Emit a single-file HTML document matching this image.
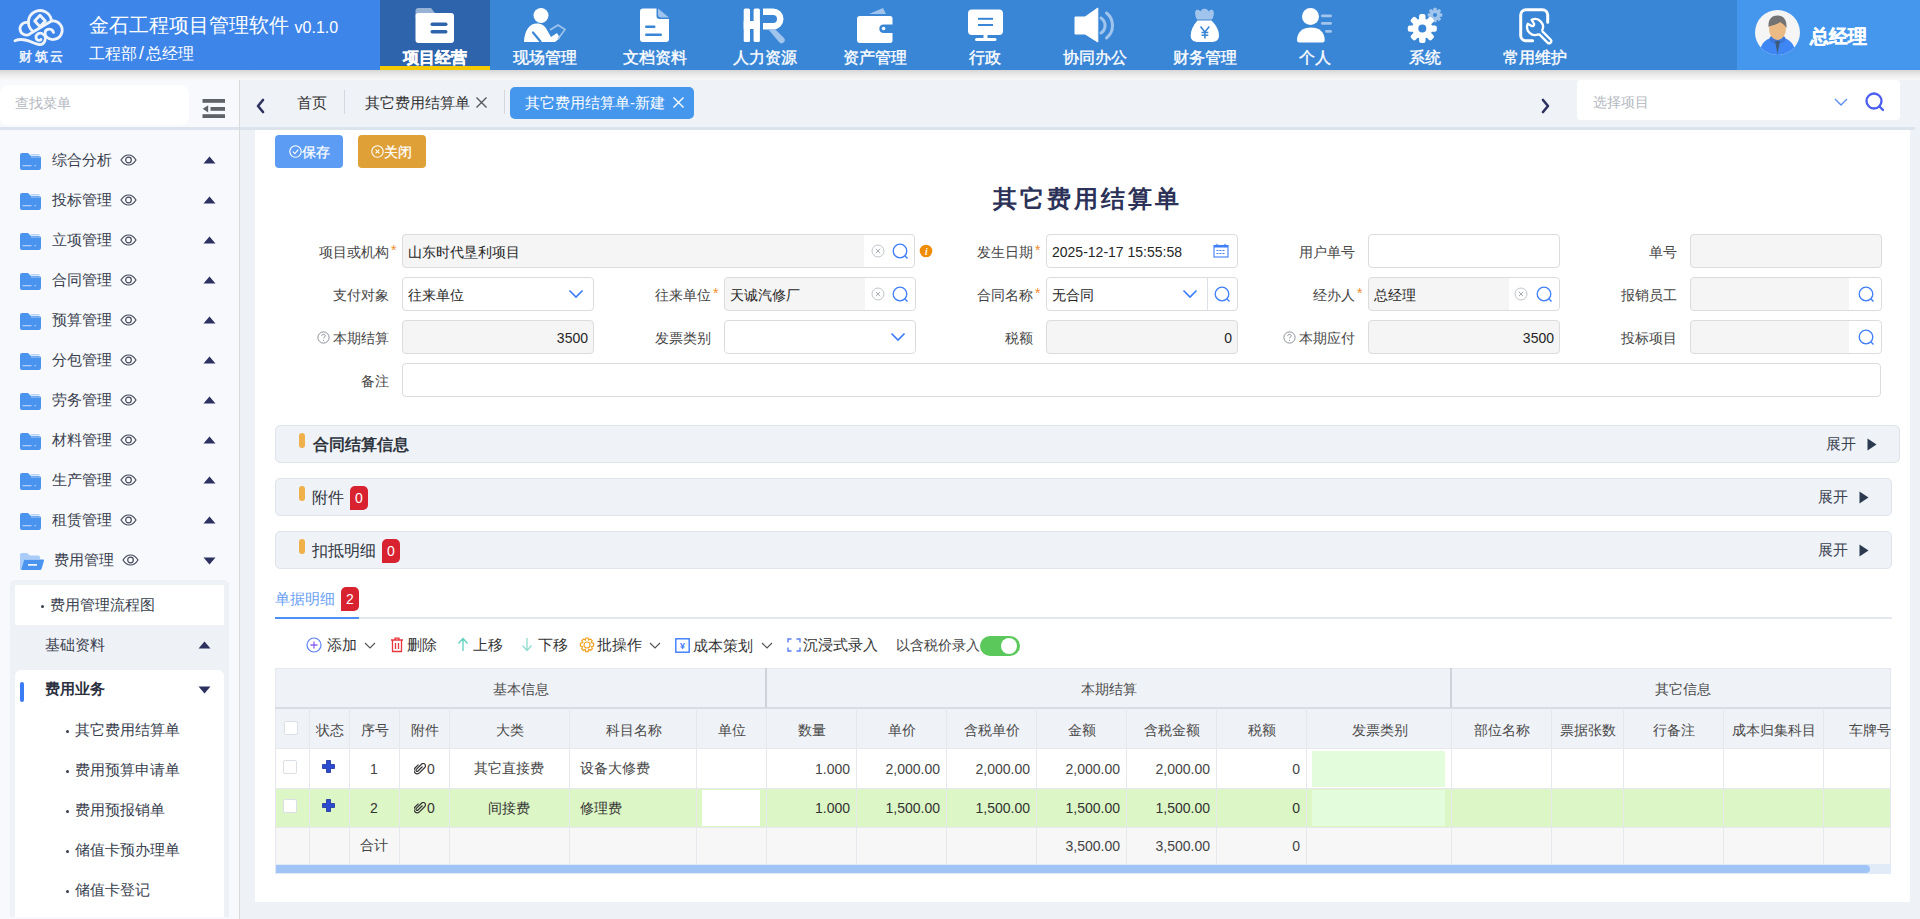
<!DOCTYPE html>
<html><head><meta charset="utf-8">
<style>
*{box-sizing:border-box;margin:0;padding:0}
html,body{width:1920px;height:919px;overflow:hidden;background:#eef1f6;font-family:"Liberation Sans",sans-serif;color:#333;font-size:14px}
.a{position:absolute}
#hdr{left:0;top:0;width:1920px;height:70px;background:#3a86d6}
#logo{left:0;top:0;width:380px;height:70px;background:#3d85e8}
#user{left:1737px;top:0;width:183px;height:70px;background:#4597ee}
.nav{top:0;width:110px;height:70px;color:#fff;text-align:center}
.nav .lb{position:absolute;left:0;top:47.5px;-webkit-text-stroke:.35px #fff;width:110px;font-size:16px;line-height:20px;white-space:nowrap}
.nav svg{position:absolute;left:35px;top:7px}
.nav.on{background:#2e64ab}
.nav.on .lb{font-weight:bold}
.nav.on:after{content:"";position:absolute;left:0;top:66px;width:110px;height:4px;background:#f5c900}
#shadow{left:0;top:70px;width:1920px;height:10px;background:linear-gradient(#d6d6d6,#ececec 50%,#f8f8f8)}
#tabbar{left:240px;top:80px;width:1680px;height:47px;background:#eff2f7}
#sbtop{left:0;top:80px;width:240px;height:47px;background:#f7f9fc}
#tbline{left:0;top:127px;width:1915px;height:3px;background:#dde3ec}
#side{left:0;top:130px;width:239px;height:789px;background:#f7f9fc}
#sideb{left:239px;top:80px;width:1px;height:839px;background:#dadada}
.mi{left:0;width:239px;height:40px}
.mi .t{position:absolute;left:52px;top:10px;font-size:15px;line-height:20px;color:#3a3f4f}
.st{left:52px;font-size:15px;line-height:20px;color:#3a3f4f;white-space:nowrap}
.st2{font-size:15px;line-height:20px;color:#3a3f4f;white-space:nowrap}
.sd{font-size:15px;line-height:20px;color:#3a3f4f}
.btn{width:68px;height:33px;border-radius:4px;color:#fff;font-size:14px;line-height:20px;-webkit-text-stroke:.25px #fff}
.inp{height:34px;border:1px solid #dcdcdc;border-radius:4px}
.it{font-size:14px;line-height:20px;color:#262626;white-space:nowrap}
.lbl{width:200px;text-align:right;font-size:14px;line-height:20px;color:#444;white-space:nowrap}
.star{font-size:14px;line-height:20px;color:#f08c2a}
.sec{background:#eff3f8;border:1px solid #dfe3ea;border-radius:5px}
.pill{width:6px;height:15px;border-radius:3px;background:#f0b14a}
.zk{font-size:15px;line-height:20px;color:#3a4150;white-space:nowrap}
.badge{width:18px;height:24px;border-radius:5px 5px 5px 0;background:#d9222f;color:#fff;font-size:14px;line-height:24px;text-align:center}
.tb{font-size:15px;line-height:20px;color:#333;white-space:nowrap}
.th{font-size:14px;line-height:20px;color:#4a4a4a;text-align:center;white-space:nowrap}
.td{font-size:14px;line-height:20px;white-space:nowrap;color:#444}
.cb{width:14px;height:14px;border:1px solid #dcdfe6;border-radius:2px;background:#fff}
#panel{left:255px;top:130px;width:1655px;height:772px;background:#fff}
</style></head><body>
<div id="hdr" class="a"></div>
<div id="logo" class="a"></div>
<div id="user" class="a"></div>
<svg class="a" style="left:0px;top:0px" width="80" height="50" viewBox="0 0 80 50"><g fill="none" stroke="#eef3fc" stroke-width="2.8" stroke-linecap="round" stroke-linejoin="round">
<path d="M28.5,22.8 A6.3,6.3 0 1 0 30,33.8 L51.5,21 A9.3,9.3 0 1 1 46.5,37"/>
<path d="M32.5,31 A11.6,11.6 0 1 1 51.5,20.5"/>
<path d="M40,15.2 L45.3,21 L40,26.8 L34.7,21Z"/>
<path d="M53.5,32.5 A4.5,4.5 0 0 0 45.2,31.5 C44.7,33.5 45.3,35.5 46.5,37"/>
<path d="M41,39.5 C40,41 36,40.5 36,37.5 C36,34 39.5,32.5 42,33.5 C45,35 46,38 45,40.5 C44,43.5 41.5,44.8 39,44.5 C34,44 29,39.5 21,39.5 C18,39.5 16,40.3 15,40.8"/>
</g></svg>
<div class="a" style="left:19px;top:48px;width:50px;font-size:13px;line-height:17px;font-weight:bold;color:#eef3fc;letter-spacing:2.5px;white-space:nowrap">财筑云</div>
<div class="a" style="left:89px;top:12px;font-size:20px;line-height:26px;color:#fff;white-space:nowrap">金石工程项目管理软件 <span style="font-size:16px;position:relative;top:1px">v0.1.0</span></div>
<div class="a" style="left:89px;top:42px;font-size:16px;line-height:22px;color:#fff;white-space:nowrap">工程部<span style="margin:0 2px;font-size:18px">/</span>总经理</div>
<div class="a nav on" style="left:380px"><svg width="50" height="40" viewBox="0 0 50 40" style="left:30px;top:5px"><path d="M5.5,6 a3,3 0 0 1 3,-3 H21 l4,5 V12 H5.5Z" fill="#97b2d5"/><rect x="5.5" y="8" width="38.5" height="30" rx="3" fill="#fff"/><rect x="20.5" y="17.5" width="17" height="3.5" rx="1.7" fill="#2e64ab"/><rect x="20.5" y="25" width="17" height="3.5" rx="1.7" fill="#2e64ab"/></svg><div class="lb">项目经营</div></div>
<div class="a nav" style="left:490px"><svg width="50" height="40" viewBox="0 0 50 40" style="left:30px;top:5px"><circle cx="21" cy="10.5" r="7.5" fill="#fff"/><path d="M4,37 C4.5,26 9,18.5 17,18.5 C22,18.5 25,21 27,25 L31,32 L37,28 L40,33 L35,37 Z" fill="#fff"/><path d="M30,25 L38,20 L45,24.5 L38,34" fill="none" stroke="#a0c4ec" stroke-width="1.6"/><path d="M13,27.5 L20.5,36.5" stroke="#3a86d6" stroke-width="2.2" stroke-linecap="round"/></svg><div class="lb">现场管理</div></div>
<div class="a nav" style="left:600px"><svg width="50" height="40" viewBox="0 0 50 40" style="left:30px;top:5px"><path d="M13,3.5 H26.5 V11 a3,3 0 0 0 3,3 H39 V34 a3,3 0 0 1 -3,3 H13 a3,3 0 0 1 -3,-3 V6.5 a3,3 0 0 1 3,-3 Z" fill="#fff"/><path d="M28,3.5 L39,12.5 H31 a3,3 0 0 1 -3,-3 Z" fill="#a0c4ec"/><rect x="15" y="20.5" width="10.5" height="2.5" rx="1.2" fill="#3a86d6"/><rect x="15" y="28.5" width="17" height="2.5" rx="1.2" fill="#3a86d6"/></svg><div class="lb">文档资料</div></div>
<div class="a nav" style="left:710px"><svg width="50" height="40" viewBox="0 0 50 40" style="left:30px;top:5px"><rect x="3.7" y="3.5" width="6.3" height="33.5" rx="1.5" fill="#fff"/><rect x="13.6" y="3.5" width="6.3" height="33.5" rx="1.5" fill="#fff"/><rect x="3.7" y="16" width="16" height="8" fill="#fff"/><path d="M23,3.5 H33 a10.5,10.5 0 0 1 0,21 H23 V18 H33 a4,4 0 0 0 0,-8 H23 Z" fill="#fff"/><path d="M28,24 L35,24 L44,33 a3,3 0 0 1 -5,4 Z" fill="#a0c4ec"/></svg><div class="lb">人力资源</div></div>
<div class="a nav" style="left:820px"><svg width="50" height="40" viewBox="0 0 50 40" style="left:30px;top:5px"><path d="M19,9 L33,3 L36,9 Z" fill="#a0c4ec"/><path d="M10,11 H40 a2.5,2.5 0 0 1 2.5,2.5 V19.5 H33 a4.3,4.3 0 0 0 0,8.5 H42.5 V35.5 a2.5,2.5 0 0 1 -2.5,2.5 H10 a3,3 0 0 1 -3,-3 V14 a3,3 0 0 1 3,-3Z" fill="#fff"/><circle cx="33.6" cy="23.5" r="1.8" fill="#fff"/></svg><div class="lb">资产管理</div></div>
<div class="a nav" style="left:930px"><svg width="50" height="40" viewBox="0 0 50 40" style="left:30px;top:5px"><rect x="8" y="4.5" width="35" height="25.5" rx="4" fill="#fff"/><rect x="18" y="12.8" width="15" height="2" fill="#3a86d6"/><rect x="18" y="19" width="15" height="2" fill="#3a86d6"/><rect x="23.5" y="30" width="4" height="4" fill="#fff"/><rect x="15" y="33" width="21.5" height="3" rx="1.5" fill="#fff"/></svg><div class="lb">行政</div></div>
<div class="a nav" style="left:1040px"><svg width="50" height="40" viewBox="0 0 50 40" style="left:30px;top:5px"><path d="M5,12 H15 L27.8,3 V37 L15,29 H5 Z" fill="#fff" stroke="#fff" stroke-width="1" stroke-linejoin="round"/><path d="M31,13 A9,9 0 0 1 31,28" fill="none" stroke="#a0c4ec" stroke-width="3" stroke-linecap="round"/><path d="M36.5,8 A16,16 0 0 1 36.5,33" fill="none" stroke="#a0c4ec" stroke-width="3" stroke-linecap="round"/></svg><div class="lb">协同办公</div></div>
<div class="a nav" style="left:1150px"><svg width="50" height="40" viewBox="0 0 50 40" style="left:30px;top:5px"><path d="M17,14.5 C15.5,12 14.5,8.5 15.5,6 C16.5,4 19,4.5 20.5,6.5 C21.5,4.5 23,3.5 24.5,4 C26,3.5 27.5,4.5 28.5,6.5 C30,4.5 32.5,4 33.5,6 C34.5,8.5 33.5,12 32,14.5 Z" fill="#a0c4ec"/><path d="M17.5,15.5 H31.5 C36.5,20.5 39,25.5 39,30.5 C39,35 36,37 31,37 H18.5 C13.5,37 10.7,35 10.7,30.5 C10.7,25.5 13,20.5 17.5,15.5Z" fill="#fff"/><path d="M20.5,21.5 L24.9,27 L29.3,21.5 M24.9,27 V33.5 M21.5,27.5 H28.3 M21.5,30.3 H28.3" fill="none" stroke="#3a86d6" stroke-width="1.6"/></svg><div class="lb">财务管理</div></div>
<div class="a nav" style="left:1260px"><svg width="50" height="40" viewBox="0 0 50 40" style="left:30px;top:5px"><circle cx="20.5" cy="11.5" r="8.5" fill="#fff"/><path d="M7,35 C7,27 13,22.5 21,22.5 C29,22.5 34.7,27 34.7,35 a2.5,2.5 0 0 1 -2.5,2.5 H9.5 a2.5,2.5 0 0 1 -2.5,-2.5Z" fill="#fff"/><rect x="31" y="9.5" width="11" height="2.8" rx="1.4" fill="#a0c4ec"/><rect x="31" y="17" width="11" height="2.8" rx="1.4" fill="#a0c4ec"/><rect x="35" y="25" width="7" height="2.8" rx="1.4" fill="#a0c4ec"/></svg><div class="lb">个人</div></div>
<div class="a nav" style="left:1370px"><svg width="50" height="40" viewBox="0 0 50 40" style="left:30px;top:5px"><g transform="translate(35,10)"><circle r="5.3" fill="#a0c4ec"/><g fill="#a0c4ec"><rect x="-1.7" y="-7.3" width="3.4" height="14.6" rx=".8"/><rect x="-1.7" y="-7.3" width="3.4" height="14.6" rx=".8" transform="rotate(45)"/><rect x="-1.7" y="-7.3" width="3.4" height="14.6" rx=".8" transform="rotate(90)"/><rect x="-1.7" y="-7.3" width="3.4" height="14.6" rx=".8" transform="rotate(135)"/></g><circle r="2" fill="#3a86d6"/></g><g transform="translate(22.3,23.6)"><circle r="10" fill="#fff"/><g fill="#fff"><rect x="-3.2" y="-14.5" width="6.4" height="29" rx="2"/><rect x="-3.2" y="-14.5" width="6.4" height="29" rx="2" transform="rotate(45)"/><rect x="-3.2" y="-14.5" width="6.4" height="29" rx="2" transform="rotate(90)"/><rect x="-3.2" y="-14.5" width="6.4" height="29" rx="2" transform="rotate(135)"/></g><circle r="4" fill="#3a86d6"/></g></svg><div class="lb">系统</div></div>
<div class="a nav" style="left:1480px"><svg width="50" height="40" viewBox="0 0 50 40" style="left:30px;top:5px"><path d="M37.7,17.3 V10 a5.3,5.3 0 0 0 -5.3,-5.3 H16 a5.3,5.3 0 0 0 -5.3,5.3 V30.5 a5.3,5.3 0 0 0 5.3,5.3 H22.6" fill="none" stroke="#fff" stroke-width="3" stroke-linecap="round"/><path transform="translate(2.5,2.2) scale(0.9)" d="M32.7,26.27 A8.8,8.8 0 0 0 21.28,14.02 L23.89,18.37 A2,2 0 0 1 21.37,20.89 L17.02,18.28 A8.8,8.8 0 0 0 29.27,29.7 M32.7,26.27 L42.3,35.9 A2.4,2.4 0 0 1 38.9,39.3 L29.27,29.7" fill="none" stroke="#fff" stroke-width="2.6" stroke-linejoin="round"/></svg><div class="lb">常用维护</div></div>
<svg class="a" style="left:1755px;top:10px" width="46" height="46" viewBox="0 0 46 46"><defs><clipPath id="avc"><circle cx="22.5" cy="22.5" r="22.5"/></clipPath></defs><circle cx="22.5" cy="22.5" r="22.5" fill="#f5f5f5"/><g clip-path="url(#avc)"><path d="M4.5,45 C4.5,33 12,27 22.5,27 C33,27 40.5,33 40.5,45Z" fill="#3f86f5"/><ellipse cx="22.5" cy="29" rx="8" ry="5" fill="#3a77d8"/><path d="M20,31 L22.5,44 L25,31Z" fill="#3d5a7a"/><ellipse cx="22.5" cy="19" rx="8.5" ry="11" fill="#ecbb85"/><path d="M13.5,17 C13,9 17,5.5 22.5,5.5 C28,5.5 32,9 31.5,18 C29,14 26,13 25,12 C22,15 17,15 13.5,17Z" fill="#737373"/></g></svg>
<div class="a" style="left:1810px;top:25px;font-size:18.5px;line-height:24px;font-weight:bold;color:#fff;-webkit-text-stroke:.4px #fff;white-space:nowrap">总经理</div>
<div id="shadow" class="a"></div>
<div id="sbtop" class="a"></div>
<div id="tabbar" class="a"></div>
<div id="tbline" class="a"></div>
<div class="a" style="left:0;top:85px;width:189px;height:40px;background:#fff;border-radius:8px"></div>
<div class="a" style="left:15px;top:93px;font-size:14px;line-height:20px;color:#b4b8bf">查找菜单</div>
<svg class="a" style="left:202px;top:99px" width="24" height="21" viewBox="0 0 24 21"><g fill="#5f6368"><rect x="0.5" y="0" width="22.5" height="3.8"/><rect x="8.5" y="8" width="14.5" height="3.8"/><rect x="0.5" y="15.2" width="22.5" height="3.8"/><path d="M0.8,9.8 L6.2,6.2 V13.4Z"/></g></svg>
<svg class="a" style="left:255px;top:98px" width="12" height="16" viewBox="0 0 12 16"><path d="M8,2 L3,8 L8,14" fill="none" stroke="#2d3160" stroke-width="2.6" stroke-linecap="round" stroke-linejoin="round"/></svg>
<div class="a" style="left:297px;top:93px;font-size:15px;line-height:20px;color:#333">首页</div>
<div class="a" style="left:344px;top:90px;width:1px;height:24px;background:#d4d8de"></div>
<div class="a" style="left:365px;top:93px;font-size:15px;line-height:20px;color:#333;white-space:nowrap">其它费用结算单</div>
<svg class="a" style="left:475px;top:96px" width="13" height="13" viewBox="0 0 13 13"><path d="M1.5,1.5 L11.5,11.5 M11.5,1.5 L1.5,11.5" stroke="#555" stroke-width="1.3"/></svg>
<div class="a" style="left:504px;top:90px;width:1px;height:24px;background:#d4d8de"></div>
<div class="a" style="left:510px;top:87px;width:184px;height:32px;background:#4597ee;border-radius:5px"></div>
<div class="a" style="left:525px;top:93px;font-size:15px;line-height:20px;color:#fff;white-space:nowrap">其它费用结算单-新建</div>
<svg class="a" style="left:672px;top:96px" width="13" height="13" viewBox="0 0 13 13"><path d="M1.5,1.5 L11.5,11.5 M11.5,1.5 L1.5,11.5" stroke="#fff" stroke-width="1.4"/></svg>
<svg class="a" style="left:1539px;top:98px" width="12" height="16" viewBox="0 0 12 16"><path d="M4,2 L9,8 L4,14" fill="none" stroke="#2d3160" stroke-width="2.6" stroke-linecap="round" stroke-linejoin="round"/></svg>
<div class="a" style="left:1577px;top:80px;width:323px;height:40px;background:#fff;border-radius:4px"></div>
<div class="a" style="left:1593px;top:92px;font-size:14px;line-height:20px;color:#b4b8bf">选择项目</div>
<svg class="a" style="left:1833px;top:97px" width="16" height="10" viewBox="0 0 16 10"><path d="M2,2 L8,8 L14,2" fill="none" stroke="#5a8df0" stroke-width="1.4"/></svg>
<svg class="a" style="left:1864px;top:91px" width="22" height="22" viewBox="0 0 22 22"><circle cx="10" cy="10" r="7.5" fill="none" stroke="#4b5ef0" stroke-width="2.3"/><path d="M15.5,15.5 L19,19" stroke="#4b5ef0" stroke-width="2.4" stroke-linecap="round"/></svg>
<div id="side" class="a"></div>
<div id="sideb" class="a"></div>
<svg class="a" style="left:20px;top:153px" width="22" height="18" viewBox="0 0 22 18"><path d="M0,2 a2,2 0 0 1 2,-2 H8 L11,3 H19 a2,2 0 0 1 2,2 V15 a2,2 0 0 1 -2,2 H2 a2,2 0 0 1 -2,-2Z" fill="#4a94f0"/><rect x="11" y="1.2" width="8.5" height="1.2" fill="#a9cdf8"/><rect x="11" y="3.6" width="9" height="0.9" fill="#a9cdf8"/><rect x="2.5" y="12" width="9" height="1.3" fill="#a9cdf8"/><rect x="14.5" y="12" width="1.5" height="1.3" fill="#a9cdf8"/></svg><div class="a st" style="top:150px">综合分析</div><svg class="a" style="left:120px;top:154px" width="17" height="12" viewBox="0 0 17 12"><path d="M1,6 C3.5,2 6,1 8.5,1 C11,1 13.5,2 16,6 C13.5,10 11,11 8.5,11 C6,11 3.5,10 1,6Z" fill="none" stroke="#454a5a" stroke-width="1.2"/><circle cx="8.5" cy="6" r="2.8" fill="none" stroke="#454a5a" stroke-width="1.2"/></svg><svg class="a" style="left:203px;top:156px" width="13" height="8" viewBox="0 0 13 8"><path d="M0.5,7.5 L6.5,0.5 L12.5,7.5Z" fill="#2d3160"/></svg>
<svg class="a" style="left:20px;top:193px" width="22" height="18" viewBox="0 0 22 18"><path d="M0,2 a2,2 0 0 1 2,-2 H8 L11,3 H19 a2,2 0 0 1 2,2 V15 a2,2 0 0 1 -2,2 H2 a2,2 0 0 1 -2,-2Z" fill="#4a94f0"/><rect x="11" y="1.2" width="8.5" height="1.2" fill="#a9cdf8"/><rect x="11" y="3.6" width="9" height="0.9" fill="#a9cdf8"/><rect x="2.5" y="12" width="9" height="1.3" fill="#a9cdf8"/><rect x="14.5" y="12" width="1.5" height="1.3" fill="#a9cdf8"/></svg><div class="a st" style="top:190px">投标管理</div><svg class="a" style="left:120px;top:194px" width="17" height="12" viewBox="0 0 17 12"><path d="M1,6 C3.5,2 6,1 8.5,1 C11,1 13.5,2 16,6 C13.5,10 11,11 8.5,11 C6,11 3.5,10 1,6Z" fill="none" stroke="#454a5a" stroke-width="1.2"/><circle cx="8.5" cy="6" r="2.8" fill="none" stroke="#454a5a" stroke-width="1.2"/></svg><svg class="a" style="left:203px;top:196px" width="13" height="8" viewBox="0 0 13 8"><path d="M0.5,7.5 L6.5,0.5 L12.5,7.5Z" fill="#2d3160"/></svg>
<svg class="a" style="left:20px;top:233px" width="22" height="18" viewBox="0 0 22 18"><path d="M0,2 a2,2 0 0 1 2,-2 H8 L11,3 H19 a2,2 0 0 1 2,2 V15 a2,2 0 0 1 -2,2 H2 a2,2 0 0 1 -2,-2Z" fill="#4a94f0"/><rect x="11" y="1.2" width="8.5" height="1.2" fill="#a9cdf8"/><rect x="11" y="3.6" width="9" height="0.9" fill="#a9cdf8"/><rect x="2.5" y="12" width="9" height="1.3" fill="#a9cdf8"/><rect x="14.5" y="12" width="1.5" height="1.3" fill="#a9cdf8"/></svg><div class="a st" style="top:230px">立项管理</div><svg class="a" style="left:120px;top:234px" width="17" height="12" viewBox="0 0 17 12"><path d="M1,6 C3.5,2 6,1 8.5,1 C11,1 13.5,2 16,6 C13.5,10 11,11 8.5,11 C6,11 3.5,10 1,6Z" fill="none" stroke="#454a5a" stroke-width="1.2"/><circle cx="8.5" cy="6" r="2.8" fill="none" stroke="#454a5a" stroke-width="1.2"/></svg><svg class="a" style="left:203px;top:236px" width="13" height="8" viewBox="0 0 13 8"><path d="M0.5,7.5 L6.5,0.5 L12.5,7.5Z" fill="#2d3160"/></svg>
<svg class="a" style="left:20px;top:273px" width="22" height="18" viewBox="0 0 22 18"><path d="M0,2 a2,2 0 0 1 2,-2 H8 L11,3 H19 a2,2 0 0 1 2,2 V15 a2,2 0 0 1 -2,2 H2 a2,2 0 0 1 -2,-2Z" fill="#4a94f0"/><rect x="11" y="1.2" width="8.5" height="1.2" fill="#a9cdf8"/><rect x="11" y="3.6" width="9" height="0.9" fill="#a9cdf8"/><rect x="2.5" y="12" width="9" height="1.3" fill="#a9cdf8"/><rect x="14.5" y="12" width="1.5" height="1.3" fill="#a9cdf8"/></svg><div class="a st" style="top:270px">合同管理</div><svg class="a" style="left:120px;top:274px" width="17" height="12" viewBox="0 0 17 12"><path d="M1,6 C3.5,2 6,1 8.5,1 C11,1 13.5,2 16,6 C13.5,10 11,11 8.5,11 C6,11 3.5,10 1,6Z" fill="none" stroke="#454a5a" stroke-width="1.2"/><circle cx="8.5" cy="6" r="2.8" fill="none" stroke="#454a5a" stroke-width="1.2"/></svg><svg class="a" style="left:203px;top:276px" width="13" height="8" viewBox="0 0 13 8"><path d="M0.5,7.5 L6.5,0.5 L12.5,7.5Z" fill="#2d3160"/></svg>
<svg class="a" style="left:20px;top:313px" width="22" height="18" viewBox="0 0 22 18"><path d="M0,2 a2,2 0 0 1 2,-2 H8 L11,3 H19 a2,2 0 0 1 2,2 V15 a2,2 0 0 1 -2,2 H2 a2,2 0 0 1 -2,-2Z" fill="#4a94f0"/><rect x="11" y="1.2" width="8.5" height="1.2" fill="#a9cdf8"/><rect x="11" y="3.6" width="9" height="0.9" fill="#a9cdf8"/><rect x="2.5" y="12" width="9" height="1.3" fill="#a9cdf8"/><rect x="14.5" y="12" width="1.5" height="1.3" fill="#a9cdf8"/></svg><div class="a st" style="top:310px">预算管理</div><svg class="a" style="left:120px;top:314px" width="17" height="12" viewBox="0 0 17 12"><path d="M1,6 C3.5,2 6,1 8.5,1 C11,1 13.5,2 16,6 C13.5,10 11,11 8.5,11 C6,11 3.5,10 1,6Z" fill="none" stroke="#454a5a" stroke-width="1.2"/><circle cx="8.5" cy="6" r="2.8" fill="none" stroke="#454a5a" stroke-width="1.2"/></svg><svg class="a" style="left:203px;top:316px" width="13" height="8" viewBox="0 0 13 8"><path d="M0.5,7.5 L6.5,0.5 L12.5,7.5Z" fill="#2d3160"/></svg>
<svg class="a" style="left:20px;top:353px" width="22" height="18" viewBox="0 0 22 18"><path d="M0,2 a2,2 0 0 1 2,-2 H8 L11,3 H19 a2,2 0 0 1 2,2 V15 a2,2 0 0 1 -2,2 H2 a2,2 0 0 1 -2,-2Z" fill="#4a94f0"/><rect x="11" y="1.2" width="8.5" height="1.2" fill="#a9cdf8"/><rect x="11" y="3.6" width="9" height="0.9" fill="#a9cdf8"/><rect x="2.5" y="12" width="9" height="1.3" fill="#a9cdf8"/><rect x="14.5" y="12" width="1.5" height="1.3" fill="#a9cdf8"/></svg><div class="a st" style="top:350px">分包管理</div><svg class="a" style="left:120px;top:354px" width="17" height="12" viewBox="0 0 17 12"><path d="M1,6 C3.5,2 6,1 8.5,1 C11,1 13.5,2 16,6 C13.5,10 11,11 8.5,11 C6,11 3.5,10 1,6Z" fill="none" stroke="#454a5a" stroke-width="1.2"/><circle cx="8.5" cy="6" r="2.8" fill="none" stroke="#454a5a" stroke-width="1.2"/></svg><svg class="a" style="left:203px;top:356px" width="13" height="8" viewBox="0 0 13 8"><path d="M0.5,7.5 L6.5,0.5 L12.5,7.5Z" fill="#2d3160"/></svg>
<svg class="a" style="left:20px;top:393px" width="22" height="18" viewBox="0 0 22 18"><path d="M0,2 a2,2 0 0 1 2,-2 H8 L11,3 H19 a2,2 0 0 1 2,2 V15 a2,2 0 0 1 -2,2 H2 a2,2 0 0 1 -2,-2Z" fill="#4a94f0"/><rect x="11" y="1.2" width="8.5" height="1.2" fill="#a9cdf8"/><rect x="11" y="3.6" width="9" height="0.9" fill="#a9cdf8"/><rect x="2.5" y="12" width="9" height="1.3" fill="#a9cdf8"/><rect x="14.5" y="12" width="1.5" height="1.3" fill="#a9cdf8"/></svg><div class="a st" style="top:390px">劳务管理</div><svg class="a" style="left:120px;top:394px" width="17" height="12" viewBox="0 0 17 12"><path d="M1,6 C3.5,2 6,1 8.5,1 C11,1 13.5,2 16,6 C13.5,10 11,11 8.5,11 C6,11 3.5,10 1,6Z" fill="none" stroke="#454a5a" stroke-width="1.2"/><circle cx="8.5" cy="6" r="2.8" fill="none" stroke="#454a5a" stroke-width="1.2"/></svg><svg class="a" style="left:203px;top:396px" width="13" height="8" viewBox="0 0 13 8"><path d="M0.5,7.5 L6.5,0.5 L12.5,7.5Z" fill="#2d3160"/></svg>
<svg class="a" style="left:20px;top:433px" width="22" height="18" viewBox="0 0 22 18"><path d="M0,2 a2,2 0 0 1 2,-2 H8 L11,3 H19 a2,2 0 0 1 2,2 V15 a2,2 0 0 1 -2,2 H2 a2,2 0 0 1 -2,-2Z" fill="#4a94f0"/><rect x="11" y="1.2" width="8.5" height="1.2" fill="#a9cdf8"/><rect x="11" y="3.6" width="9" height="0.9" fill="#a9cdf8"/><rect x="2.5" y="12" width="9" height="1.3" fill="#a9cdf8"/><rect x="14.5" y="12" width="1.5" height="1.3" fill="#a9cdf8"/></svg><div class="a st" style="top:430px">材料管理</div><svg class="a" style="left:120px;top:434px" width="17" height="12" viewBox="0 0 17 12"><path d="M1,6 C3.5,2 6,1 8.5,1 C11,1 13.5,2 16,6 C13.5,10 11,11 8.5,11 C6,11 3.5,10 1,6Z" fill="none" stroke="#454a5a" stroke-width="1.2"/><circle cx="8.5" cy="6" r="2.8" fill="none" stroke="#454a5a" stroke-width="1.2"/></svg><svg class="a" style="left:203px;top:436px" width="13" height="8" viewBox="0 0 13 8"><path d="M0.5,7.5 L6.5,0.5 L12.5,7.5Z" fill="#2d3160"/></svg>
<svg class="a" style="left:20px;top:473px" width="22" height="18" viewBox="0 0 22 18"><path d="M0,2 a2,2 0 0 1 2,-2 H8 L11,3 H19 a2,2 0 0 1 2,2 V15 a2,2 0 0 1 -2,2 H2 a2,2 0 0 1 -2,-2Z" fill="#4a94f0"/><rect x="11" y="1.2" width="8.5" height="1.2" fill="#a9cdf8"/><rect x="11" y="3.6" width="9" height="0.9" fill="#a9cdf8"/><rect x="2.5" y="12" width="9" height="1.3" fill="#a9cdf8"/><rect x="14.5" y="12" width="1.5" height="1.3" fill="#a9cdf8"/></svg><div class="a st" style="top:470px">生产管理</div><svg class="a" style="left:120px;top:474px" width="17" height="12" viewBox="0 0 17 12"><path d="M1,6 C3.5,2 6,1 8.5,1 C11,1 13.5,2 16,6 C13.5,10 11,11 8.5,11 C6,11 3.5,10 1,6Z" fill="none" stroke="#454a5a" stroke-width="1.2"/><circle cx="8.5" cy="6" r="2.8" fill="none" stroke="#454a5a" stroke-width="1.2"/></svg><svg class="a" style="left:203px;top:476px" width="13" height="8" viewBox="0 0 13 8"><path d="M0.5,7.5 L6.5,0.5 L12.5,7.5Z" fill="#2d3160"/></svg>
<svg class="a" style="left:20px;top:513px" width="22" height="18" viewBox="0 0 22 18"><path d="M0,2 a2,2 0 0 1 2,-2 H8 L11,3 H19 a2,2 0 0 1 2,2 V15 a2,2 0 0 1 -2,2 H2 a2,2 0 0 1 -2,-2Z" fill="#4a94f0"/><rect x="11" y="1.2" width="8.5" height="1.2" fill="#a9cdf8"/><rect x="11" y="3.6" width="9" height="0.9" fill="#a9cdf8"/><rect x="2.5" y="12" width="9" height="1.3" fill="#a9cdf8"/><rect x="14.5" y="12" width="1.5" height="1.3" fill="#a9cdf8"/></svg><div class="a st" style="top:510px">租赁管理</div><svg class="a" style="left:120px;top:514px" width="17" height="12" viewBox="0 0 17 12"><path d="M1,6 C3.5,2 6,1 8.5,1 C11,1 13.5,2 16,6 C13.5,10 11,11 8.5,11 C6,11 3.5,10 1,6Z" fill="none" stroke="#454a5a" stroke-width="1.2"/><circle cx="8.5" cy="6" r="2.8" fill="none" stroke="#454a5a" stroke-width="1.2"/></svg><svg class="a" style="left:203px;top:516px" width="13" height="8" viewBox="0 0 13 8"><path d="M0.5,7.5 L6.5,0.5 L12.5,7.5Z" fill="#2d3160"/></svg>
<svg class="a" style="left:20px;top:553px" width="24" height="18" viewBox="0 0 24 18"><path d="M0,2 a2,2 0 0 1 2,-2 H7 L10,2.5 H18 a2,2 0 0 1 2,2 V6 H5 L2,17 H1 a1,1 0 0 1 -1,-1Z" fill="#a9cdf8"/><path d="M5,6.5 H23 a1,1 0 0 1 1,1.2 L21.5,16 a1.5,1.5 0 0 1 -1.5,1 H2.5 a1,1 0 0 1 -1,-1.2 L4,7.5 a1.5,1.5 0 0 1 1,-1Z" fill="#4a94f0"/><rect x="8" y="11" width="9" height="1.8" fill="#e8f1fd"/></svg><div class="a st" style="left:54px;top:550px">费用管理</div><svg class="a" style="left:122px;top:554px" width="17" height="12" viewBox="0 0 17 12"><path d="M1,6 C3.5,2 6,1 8.5,1 C11,1 13.5,2 16,6 C13.5,10 11,11 8.5,11 C6,11 3.5,10 1,6Z" fill="none" stroke="#454a5a" stroke-width="1.2"/><circle cx="8.5" cy="6" r="2.8" fill="none" stroke="#454a5a" stroke-width="1.2"/></svg><svg class="a" style="left:203px;top:557px" width="13" height="8" viewBox="0 0 13 8"><path d="M0.5,0.5 L6.5,7.5 L12.5,0.5Z" fill="#2d3160"/></svg>
<div class="a" style="left:10px;top:580px;width:219px;height:337px;background:#eef1f6;border-radius:5px 5px 0 0"></div>
<div class="a" style="left:15px;top:585px;width:209px;height:40px;background:#fff"></div>
<div class="a" style="left:41px;top:605px;width:3px;height:3px;border-radius:2px;background:#3a3f4f"></div><div class="a st2" style="left:50px;top:595px">费用管理流程图</div>
<div class="a st2" style="left:45px;top:635px">基础资料</div><svg class="a" style="left:198px;top:641px" width="13" height="8" viewBox="0 0 13 8"><path d="M0.5,7.5 L6.5,0.5 L12.5,7.5Z" fill="#2d3160"/></svg>
<div class="a" style="left:15px;top:670px;width:209px;height:247px;background:#fff;border-radius:6px 6px 0 0"></div>
<div class="a" style="left:20px;top:682px;width:4px;height:20px;background:#3b7cf5;border-radius:2px"></div>
<div class="a st2" style="left:45px;top:679px;font-weight:bold;color:#2b3040">费用业务</div><svg class="a" style="left:198px;top:686px" width="13" height="8" viewBox="0 0 13 8"><path d="M0.5,0.5 L6.5,7.5 L12.5,0.5Z" fill="#2d3160"/></svg>
<div class="a" style="left:66px;top:730px;width:3px;height:3px;border-radius:2px;background:#3a3f4f"></div><div class="a st2" style="left:75px;top:720px">其它费用结算单</div>
<div class="a" style="left:66px;top:770px;width:3px;height:3px;border-radius:2px;background:#3a3f4f"></div><div class="a st2" style="left:75px;top:760px">费用预算申请单</div>
<div class="a" style="left:66px;top:810px;width:3px;height:3px;border-radius:2px;background:#3a3f4f"></div><div class="a st2" style="left:75px;top:800px">费用预报销单</div>
<div class="a" style="left:66px;top:850px;width:3px;height:3px;border-radius:2px;background:#3a3f4f"></div><div class="a st2" style="left:75px;top:840px">储值卡预办理单</div>
<div class="a" style="left:66px;top:890px;width:3px;height:3px;border-radius:2px;background:#3a3f4f"></div><div class="a st2" style="left:75px;top:880px">储值卡登记</div>
<div id="panel" class="a"></div>
<div class="a btn" style="left:275px;top:135px;background:#5c9cf5"><svg width="13" height="13" viewBox="0 0 13 13" style="position:absolute;left:14px;top:10px"><circle cx="6.5" cy="6.5" r="5.7" fill="none" stroke="#fff" stroke-width="1.1"/><path d="M3.8,6.7 L5.8,8.6 L9.3,4.6" fill="none" stroke="#fff" stroke-width="1.1"/></svg><span style="position:absolute;left:27px;top:7px">保存</span></div>
<div class="a btn" style="left:358px;top:135px;background:#dea037"><svg width="13" height="13" viewBox="0 0 13 13" style="position:absolute;left:13px;top:10px"><circle cx="6.5" cy="6.5" r="5.7" fill="none" stroke="#fff" stroke-width="1.1"/><path d="M4.6,4.6 L8.4,8.4 M8.4,4.6 L4.6,8.4" fill="none" stroke="#fff" stroke-width="1.1"/></svg><span style="position:absolute;left:26px;top:7px">关闭</span></div>
<div class="a" style="left:993px;top:184px;width:220px;font-size:24px;line-height:30px;font-weight:bold;color:#2c3257;letter-spacing:3px;white-space:nowrap">其它费用结算单</div>
<div class="a lbl" style="left:189px;top:242px">项目或机构</div><div class="a star" style="left:391px;top:240px">*</div><div class="a inp" style="left:402px;top:234px;width:513px;background:#f5f5f5"><div style="position:absolute;right:0;top:0;width:50px;height:32px;background:#fff;border-radius:0 4px 4px 0"></div></div><div class="a it" style="left:408px;top:242px">山东时代垦利项目</div><svg class="a" style="left:871px;top:244px" width="14" height="14" viewBox="0 0 14 14"><circle cx="7" cy="7" r="6" fill="none" stroke="#c0c4cc" stroke-width="1"/><path d="M4.8,4.8 L9.2,9.2 M9.2,4.8 L4.8,9.2" stroke="#a8abb2" stroke-width="1"/></svg><svg class="a" style="left:891px;top:242px" width="18" height="18" viewBox="0 0 18 18"><circle cx="9" cy="9" r="6.8" fill="none" stroke="#3f7ef8" stroke-width="1.3"/><path d="M13.8,13.8 L16.5,16.5" stroke="#3f7ef8" stroke-width="1.4"/></svg><svg class="a" style="left:919px;top:244px" width="14" height="14" viewBox="0 0 14 14"><circle cx="7" cy="7" r="6.3" fill="#f08c00"/><text x="7.3" y="11" font-size="9.5" font-weight="bold" font-style="italic" text-anchor="middle" fill="#fff" font-family="Liberation Serif">i</text></svg><div class="a lbl" style="left:833px;top:242px">发生日期</div><div class="a star" style="left:1035px;top:240px">*</div><div class="a inp" style="left:1046px;top:234px;width:192px;background:#fff"></div><div class="a it" style="left:1052px;top:242px">2025-12-17 15:55:58</div><svg class="a" style="left:1213px;top:243px" width="16" height="15" viewBox="0 0 16 15"><rect x="1" y="2.5" width="14" height="11.5" fill="none" stroke="#3f7ef8" stroke-width="1.1"/><rect x="1" y="2.5" width="14" height="2" fill="#3f7ef8"/><path d="M4,0.8 V3 M12,0.8 V3" stroke="#3f7ef8" stroke-width="1.1"/><path d="M3.5,7.5 H12.5 M3.5,10.5 H12.5" stroke="#3f7ef8" stroke-width="1" stroke-dasharray="2,1"/></svg><div class="a lbl" style="left:1155px;top:242px">用户单号</div><div class="a inp" style="left:1368px;top:234px;width:192px;background:#fff"></div><div class="a lbl" style="left:1477px;top:242px">单号</div><div class="a inp" style="left:1690px;top:234px;width:192px;background:#f5f5f5"></div>
<div class="a lbl" style="left:189px;top:285px">支付对象</div><div class="a inp" style="left:402px;top:277px;width:192px;background:#fff"></div><div class="a it" style="left:408px;top:285px">往来单位</div><svg class="a" style="left:568px;top:289px" width="16" height="10" viewBox="0 0 16 10"><path d="M1.5,1.5 L8,8 L14.5,1.5" fill="none" stroke="#3a7afe" stroke-width="1.6"/></svg><div class="a lbl" style="left:511px;top:285px">往来单位</div><div class="a star" style="left:713px;top:283px">*</div><div class="a inp" style="left:724px;top:277px;width:192px;background:#f5f5f5"><div style="position:absolute;right:0;top:0;width:50px;height:32px;background:#fff;border-radius:0 4px 4px 0"></div></div><div class="a it" style="left:730px;top:285px">天诚汽修厂</div><svg class="a" style="left:871px;top:287px" width="14" height="14" viewBox="0 0 14 14"><circle cx="7" cy="7" r="6" fill="none" stroke="#c0c4cc" stroke-width="1"/><path d="M4.8,4.8 L9.2,9.2 M9.2,4.8 L4.8,9.2" stroke="#a8abb2" stroke-width="1"/></svg><svg class="a" style="left:891px;top:285px" width="18" height="18" viewBox="0 0 18 18"><circle cx="9" cy="9" r="6.8" fill="none" stroke="#3f7ef8" stroke-width="1.3"/><path d="M13.8,13.8 L16.5,16.5" stroke="#3f7ef8" stroke-width="1.4"/></svg><div class="a lbl" style="left:833px;top:285px">合同名称</div><div class="a star" style="left:1035px;top:283px">*</div><div class="a inp" style="left:1046px;top:277px;width:192px;background:#fff"><div style="position:absolute;left:160px;top:0;width:1px;height:32px;background:#dcdfe6"></div></div><div class="a it" style="left:1052px;top:285px">无合同</div><svg class="a" style="left:1182px;top:289px" width="16" height="10" viewBox="0 0 16 10"><path d="M1.5,1.5 L8,8 L14.5,1.5" fill="none" stroke="#3a7afe" stroke-width="1.6"/></svg><svg class="a" style="left:1213px;top:285px" width="18" height="18" viewBox="0 0 18 18"><circle cx="9" cy="9" r="6.8" fill="none" stroke="#3f7ef8" stroke-width="1.3"/><path d="M13.8,13.8 L16.5,16.5" stroke="#3f7ef8" stroke-width="1.4"/></svg><div class="a lbl" style="left:1155px;top:285px">经办人</div><div class="a star" style="left:1357px;top:283px">*</div><div class="a inp" style="left:1368px;top:277px;width:192px;background:#f5f5f5"><div style="position:absolute;right:0;top:0;width:50px;height:32px;background:#fff;border-radius:0 4px 4px 0"></div></div><div class="a it" style="left:1374px;top:285px">总经理</div><svg class="a" style="left:1514px;top:287px" width="14" height="14" viewBox="0 0 14 14"><circle cx="7" cy="7" r="6" fill="none" stroke="#c0c4cc" stroke-width="1"/><path d="M4.8,4.8 L9.2,9.2 M9.2,4.8 L4.8,9.2" stroke="#a8abb2" stroke-width="1"/></svg><svg class="a" style="left:1535px;top:285px" width="18" height="18" viewBox="0 0 18 18"><circle cx="9" cy="9" r="6.8" fill="none" stroke="#3f7ef8" stroke-width="1.3"/><path d="M13.8,13.8 L16.5,16.5" stroke="#3f7ef8" stroke-width="1.4"/></svg><div class="a lbl" style="left:1477px;top:285px">报销员工</div><div class="a inp" style="left:1690px;top:277px;width:192px;background:#f5f5f5"><div style="position:absolute;right:0;top:0;width:32px;height:32px;background:#fff;border-radius:0 4px 4px 0"></div></div><svg class="a" style="left:1857px;top:285px" width="18" height="18" viewBox="0 0 18 18"><circle cx="9" cy="9" r="6.8" fill="none" stroke="#3f7ef8" stroke-width="1.3"/><path d="M13.8,13.8 L16.5,16.5" stroke="#3f7ef8" stroke-width="1.4"/></svg>
<div class="a lbl" style="left:189px;top:328px">本期结算</div><svg class="a" style="left:317px;top:331px" width="13" height="13" viewBox="0 0 13 13"><circle cx="6.5" cy="6.5" r="5.6" fill="none" stroke="#8a8f99" stroke-width="1"/><path d="M4.7,5.1 C4.7,3.9 5.5,3.3 6.5,3.3 C7.5,3.3 8.3,4 8.3,4.9 C8.3,6 6.6,6.1 6.6,7.4" fill="none" stroke="#8a8f99" stroke-width="1"/><circle cx="6.6" cy="9.3" r=".6" fill="#8a8f99"/></svg><div class="a inp" style="left:402px;top:320px;width:192px;background:#f5f5f5"></div><div class="a it" style="left:402px;width:186px;text-align:right;top:328px">3500</div><div class="a lbl" style="left:511px;top:328px">发票类别</div><div class="a inp" style="left:724px;top:320px;width:192px;background:#fff"></div><svg class="a" style="left:890px;top:332px" width="16" height="10" viewBox="0 0 16 10"><path d="M1.5,1.5 L8,8 L14.5,1.5" fill="none" stroke="#3a7afe" stroke-width="1.6"/></svg><div class="a lbl" style="left:833px;top:328px">税额</div><div class="a inp" style="left:1046px;top:320px;width:192px;background:#f5f5f5"></div><div class="a it" style="left:1046px;width:186px;text-align:right;top:328px">0</div><div class="a lbl" style="left:1155px;top:328px">本期应付</div><svg class="a" style="left:1283px;top:331px" width="13" height="13" viewBox="0 0 13 13"><circle cx="6.5" cy="6.5" r="5.6" fill="none" stroke="#8a8f99" stroke-width="1"/><path d="M4.7,5.1 C4.7,3.9 5.5,3.3 6.5,3.3 C7.5,3.3 8.3,4 8.3,4.9 C8.3,6 6.6,6.1 6.6,7.4" fill="none" stroke="#8a8f99" stroke-width="1"/><circle cx="6.6" cy="9.3" r=".6" fill="#8a8f99"/></svg><div class="a inp" style="left:1368px;top:320px;width:192px;background:#f5f5f5"></div><div class="a it" style="left:1368px;width:186px;text-align:right;top:328px">3500</div><div class="a lbl" style="left:1477px;top:328px">投标项目</div><div class="a inp" style="left:1690px;top:320px;width:192px;background:#f5f5f5"><div style="position:absolute;right:0;top:0;width:32px;height:32px;background:#fff;border-radius:0 4px 4px 0"></div></div><svg class="a" style="left:1857px;top:328px" width="18" height="18" viewBox="0 0 18 18"><circle cx="9" cy="9" r="6.8" fill="none" stroke="#3f7ef8" stroke-width="1.3"/><path d="M13.8,13.8 L16.5,16.5" stroke="#3f7ef8" stroke-width="1.4"/></svg>
<div class="a lbl" style="left:189px;top:371px">备注</div><div class="a inp" style="left:402px;top:363px;width:1479px;background:#fff"></div>
<div class="a sec" style="left:275px;top:425px;width:1625px;height:38px"></div><div class="a pill" style="left:299px;top:433px"></div><div class="a" style="left:313px;top:434px;font-size:16px;line-height:22px;font-weight:bold;color:#303640;white-space:nowrap">合同结算信息</div><div class="a zk" style="left:1826px;top:434px">展开</div><svg class="a" style="left:1867px;top:438px" width="10" height="13" viewBox="0 0 10 13"><path d="M0.5,0.5 L9.5,6.5 L0.5,12.5Z" fill="#2c3a4f"/></svg>
<div class="a sec" style="left:275px;top:478px;width:1617px;height:38px"></div><div class="a pill" style="left:299px;top:486px"></div><div class="a" style="left:312px;top:487px;font-size:16px;line-height:22px;color:#303640;white-space:nowrap">附件</div><div class="a badge" style="left:350px;top:486px">0</div><div class="a zk" style="left:1818px;top:487px">展开</div><svg class="a" style="left:1859px;top:491px" width="10" height="13" viewBox="0 0 10 13"><path d="M0.5,0.5 L9.5,6.5 L0.5,12.5Z" fill="#2c3a4f"/></svg>
<div class="a sec" style="left:275px;top:531px;width:1617px;height:38px"></div><div class="a pill" style="left:299px;top:539px"></div><div class="a" style="left:312px;top:540px;font-size:16px;line-height:22px;color:#303640;white-space:nowrap">扣抵明细</div><div class="a badge" style="left:382px;top:539px">0</div><div class="a zk" style="left:1818px;top:540px">展开</div><svg class="a" style="left:1859px;top:544px" width="10" height="13" viewBox="0 0 10 13"><path d="M0.5,0.5 L9.5,6.5 L0.5,12.5Z" fill="#2c3a4f"/></svg>
<div class="a" style="left:275px;top:589px;font-size:15px;line-height:20px;color:#6a9ff5;white-space:nowrap">单据明细</div><div class="a badge" style="left:341px;top:587px">2</div><div class="a" style="left:275px;top:617px;width:1617px;height:2px;background:#e4e7ed"></div><div class="a" style="left:275px;top:617px;width:84px;height:2px;background:#4a90f5"></div>
<svg class="a" style="left:306px;top:637px" width="16" height="16" viewBox="0 0 16 16"><circle cx="8" cy="8" r="7" fill="none" stroke="#5b7ff5" stroke-width="1.2"/><path d="M8,4.5 V11.5 M4.5,8 H11.5" stroke="#8e63f0" stroke-width="1.3"/></svg><div class="a tb" style="left:327px;top:635px">添加</div><svg class="a" style="left:364px;top:642px" width="12" height="7" viewBox="0 0 12 7"><path d="M1,1 L6,6 L11,1" fill="none" stroke="#555" stroke-width="1.2"/></svg><svg class="a" style="left:390px;top:637px" width="14" height="16" viewBox="0 0 14 16"><path d="M1,3 H13 M5,3 V1.2 H9 V3 M2.5,3 V14.5 H11.5 V3 M5.5,6 V12 M8.5,6 V12" fill="none" stroke="#e8383d" stroke-width="1.3"/></svg><div class="a tb" style="left:407px;top:635px">删除</div><svg class="a" style="left:457px;top:637px" width="12" height="15" viewBox="0 0 12 15"><path d="M6,14 V2 M1.5,6.5 L6,1.5 L10.5,6.5" fill="none" stroke="#5fd0c0" stroke-width="1.3"/></svg><div class="a tb" style="left:473px;top:635px">上移</div><svg class="a" style="left:521px;top:637px" width="12" height="15" viewBox="0 0 12 15"><path d="M6,1 V13 M1.5,8.5 L6,13.5 L10.5,8.5" fill="none" stroke="#8fdcd0" stroke-width="1.3"/></svg><div class="a tb" style="left:538px;top:635px">下移</div><svg class="a" style="left:579px;top:637px" width="16" height="16" viewBox="0 0 16 16"><g fill="none" stroke="#f0a020" stroke-width="1.2"><circle cx="8" cy="8" r="3"/><path d="M6.8,1 H9.2 L9.6,3 L11.4,2 L13.2,3.6 L12.2,5.5 L14.6,6.5 V9 L12.5,9.7 L13.4,11.6 L11.6,13.4 L9.7,12.4 L9.2,14.6 H6.8 L6.3,12.4 L4.4,13.4 L2.6,11.6 L3.5,9.7 L1.4,9 V6.5 L3.8,5.5 L2.8,3.6 L4.6,2 L6.4,3 Z"/></g></svg><div class="a tb" style="left:597px;top:635px">批操作</div><svg class="a" style="left:649px;top:642px" width="12" height="7" viewBox="0 0 12 7"><path d="M1,1 L6,6 L11,1" fill="none" stroke="#555" stroke-width="1.2"/></svg><svg class="a" style="left:675px;top:638px" width="15" height="15" viewBox="0 0 15 15"><rect x="0.8" y="0.8" width="13.4" height="13.4" fill="none" stroke="#3a7afe" stroke-width="1.4"/><text x="7.5" y="11" font-size="9" text-anchor="middle" fill="#3a7afe" font-family="Liberation Sans" font-weight="bold">¥</text></svg><div class="a tb" style="left:693px;top:636px">成本策划</div><svg class="a" style="left:761px;top:642px" width="12" height="7" viewBox="0 0 12 7"><path d="M1,1 L6,6 L11,1" fill="none" stroke="#555" stroke-width="1.2"/></svg><svg class="a" style="left:787px;top:638px" width="14" height="14" viewBox="0 0 14 14"><path d="M1,4.5 V1 H4.5 M9.5,1 H13 V4.5 M13,9.5 V13 H9.5 M4.5,13 H1 V9.5" fill="none" stroke="#5b7ff5" stroke-width="1.4"/></svg><div class="a tb" style="left:803px;top:635px">沉浸式录入</div><div class="a" style="left:896px;top:635px;font-size:14px;line-height:20px;color:#444;white-space:nowrap">以含税价录入</div><div class="a" style="left:980px;top:636px;width:40px;height:20px;border-radius:10px;background:#5ac85a"></div><div class="a" style="left:1001px;top:638px;width:16px;height:16px;border-radius:8px;background:#fff"></div>
<div class="a" style="left:275px;top:668px;width:1616px;height:81px;background:#eff2f7"></div><div class="a" style="left:275px;top:749px;width:1616px;height:40px;background:#fff"></div><div class="a" style="left:275px;top:789px;width:1616px;height:39px;background:#ddf6c6"></div><div class="a" style="left:275px;top:828px;width:1616px;height:36px;background:#f7f7f7"></div><div class="a" style="left:275px;top:668px;width:1616px;height:206px;border:1px solid #e4e7ed;border-bottom:none"></div><div class="a" style="left:275px;top:707px;width:1616px;height:2px;background:#d9dce2"></div><div class="a" style="left:275px;top:748px;width:1616px;height:1px;background:#e6e8ec"></div><div class="a" style="left:275px;top:788px;width:1616px;height:1px;background:#e6e8ec"></div><div class="a" style="left:275px;top:827px;width:1616px;height:1px;background:#e6e8ec"></div><div class="a" style="left:309px;top:708px;width:1px;height:156px;background:#e6e8ec"></div><div class="a" style="left:349px;top:708px;width:1px;height:156px;background:#e6e8ec"></div><div class="a" style="left:399px;top:708px;width:1px;height:156px;background:#e6e8ec"></div><div class="a" style="left:449px;top:708px;width:1px;height:156px;background:#e6e8ec"></div><div class="a" style="left:569px;top:708px;width:1px;height:156px;background:#e6e8ec"></div><div class="a" style="left:696px;top:708px;width:1px;height:156px;background:#e6e8ec"></div><div class="a" style="left:766px;top:708px;width:1px;height:156px;background:#e6e8ec"></div><div class="a" style="left:856px;top:708px;width:1px;height:156px;background:#e6e8ec"></div><div class="a" style="left:946px;top:708px;width:1px;height:156px;background:#e6e8ec"></div><div class="a" style="left:1036px;top:708px;width:1px;height:156px;background:#e6e8ec"></div><div class="a" style="left:1126px;top:708px;width:1px;height:156px;background:#e6e8ec"></div><div class="a" style="left:1216px;top:708px;width:1px;height:156px;background:#e6e8ec"></div><div class="a" style="left:1306px;top:708px;width:1px;height:156px;background:#e6e8ec"></div><div class="a" style="left:1451px;top:708px;width:1px;height:156px;background:#e6e8ec"></div><div class="a" style="left:1551px;top:708px;width:1px;height:156px;background:#e6e8ec"></div><div class="a" style="left:1623px;top:708px;width:1px;height:156px;background:#e6e8ec"></div><div class="a" style="left:1723px;top:708px;width:1px;height:156px;background:#e6e8ec"></div><div class="a" style="left:1823px;top:708px;width:1px;height:156px;background:#e6e8ec"></div><div class="a" style="left:765px;top:668px;width:2px;height:40px;background:#cfd2d8"></div><div class="a" style="left:1450px;top:668px;width:2px;height:40px;background:#cfd2d8"></div><div class="a th" style="left:276px;width:490px;top:679px">基本信息</div><div class="a th" style="left:767px;width:684px;top:679px">本期结算</div><div class="a th" style="left:1452px;width:462px;top:679px">其它信息</div><div class="a th" style="left:310px;width:40px;top:720px">状态</div><div class="a th" style="left:350px;width:50px;top:720px">序号</div><div class="a th" style="left:400px;width:50px;top:720px">附件</div><div class="a th" style="left:450px;width:120px;top:720px">大类</div><div class="a th" style="left:570px;width:127px;top:720px">科目名称</div><div class="a th" style="left:697px;width:70px;top:720px">单位</div><div class="a th" style="left:767px;width:90px;top:720px">数量</div><div class="a th" style="left:857px;width:90px;top:720px">单价</div><div class="a th" style="left:947px;width:90px;top:720px">含税单价</div><div class="a th" style="left:1037px;width:90px;top:720px">金额</div><div class="a th" style="left:1127px;width:90px;top:720px">含税金额</div><div class="a th" style="left:1217px;width:90px;top:720px">税额</div><div class="a th" style="left:1307px;width:145px;top:720px">发票类别</div><div class="a th" style="left:1452px;width:100px;top:720px">部位名称</div><div class="a th" style="left:1552px;width:72px;top:720px">票据张数</div><div class="a th" style="left:1624px;width:100px;top:720px">行备注</div><div class="a th" style="left:1724px;width:100px;top:720px">成本归集科目</div><div class="a th" style="left:1824px;width:92px;top:720px">车牌号</div><div class="a cb" style="left:284px;top:721px"></div><div class="a cb" style="left:283px;top:760px"></div><div class="a cb" style="left:283px;top:799px"></div><svg class="a" style="left:322px;top:760px" width="13" height="13" viewBox="0 0 13 13"><path d="M4.5,0.5 H8.5 V4.5 H12.5 V8.5 H8.5 V12.5 H4.5 V8.5 H0.5 V4.5 H4.5Z" fill="#2b4bd0" stroke="#1c2f9a" stroke-width="0.8"/></svg><svg class="a" style="left:322px;top:799px" width="13" height="13" viewBox="0 0 13 13"><path d="M4.5,0.5 H8.5 V4.5 H12.5 V8.5 H8.5 V12.5 H4.5 V8.5 H0.5 V4.5 H4.5Z" fill="#2b4bd0" stroke="#1c2f9a" stroke-width="0.8"/></svg><svg class="a" style="left:414px;top:763px" width="12" height="12" viewBox="0 0 12 12"><path d="M8.5,3.5 L4,8 a1.2,1.2 0 0 1 -1.7,-1.7 L7.5,1.2 a2.3,2.3 0 0 1 3.3,3.3 L5.2,10.1 a3.3,3.3 0 0 1 -4.6,-4.6 L4.5,1.6" fill="none" stroke="#333" stroke-width="1.2"/></svg><svg class="a" style="left:414px;top:802px" width="12" height="12" viewBox="0 0 12 12"><path d="M8.5,3.5 L4,8 a1.2,1.2 0 0 1 -1.7,-1.7 L7.5,1.2 a2.3,2.3 0 0 1 3.3,3.3 L5.2,10.1 a3.3,3.3 0 0 1 -4.6,-4.6 L4.5,1.6" fill="none" stroke="#333" stroke-width="1.2"/></svg><div class="a" style="left:1312px;top:751px;width:133px;height:36px;background:#e3fcdc"></div><div class="a" style="left:1312px;top:790px;width:133px;height:36px;background:#e3fcdc"></div><div class="a" style="left:702px;top:790px;width:58px;height:36px;background:#fff"></div><div class="a td" style="left:349px;width:50px;top:759px;text-align:center;color:#444">1</div><div class="a td" style="left:427px;top:759px">0</div><div class="a td" style="left:449px;width:120px;top:758px;text-align:center;color:#444">其它直接费</div><div class="a td" style="left:580px;top:758px;color:#444">设备大修费</div><div class="a td" style="left:766px;width:84px;top:759px;text-align:right;color:#444">1.000</div><div class="a td" style="left:856px;width:84px;top:759px;text-align:right;color:#444">2,000.00</div><div class="a td" style="left:946px;width:84px;top:759px;text-align:right;color:#444">2,000.00</div><div class="a td" style="left:1036px;width:84px;top:759px;text-align:right;color:#444">2,000.00</div><div class="a td" style="left:1126px;width:84px;top:759px;text-align:right;color:#444">2,000.00</div><div class="a td" style="left:1216px;width:84px;top:759px;text-align:right;color:#444">0</div><div class="a td" style="left:349px;width:50px;top:798px;text-align:center;color:#333">2</div><div class="a td" style="left:427px;top:798px;color:#333">0</div><div class="a td" style="left:449px;width:120px;top:798px;text-align:center;color:#333">间接费</div><div class="a td" style="left:580px;top:798px;color:#333">修理费</div><div class="a td" style="left:766px;width:84px;top:798px;text-align:right;color:#333">1.000</div><div class="a td" style="left:856px;width:84px;top:798px;text-align:right;color:#333">1,500.00</div><div class="a td" style="left:946px;width:84px;top:798px;text-align:right;color:#333">1,500.00</div><div class="a td" style="left:1036px;width:84px;top:798px;text-align:right;color:#333">1,500.00</div><div class="a td" style="left:1126px;width:84px;top:798px;text-align:right;color:#333">1,500.00</div><div class="a td" style="left:1216px;width:84px;top:798px;text-align:right;color:#333">0</div><div class="a td" style="left:349px;width:50px;top:835px;text-align:center;color:#444">合计</div><div class="a td" style="left:1036px;width:84px;top:836px;text-align:right;color:#444">3,500.00</div><div class="a td" style="left:1126px;width:84px;top:836px;text-align:right;color:#444">3,500.00</div><div class="a td" style="left:1216px;width:84px;top:836px;text-align:right;color:#444">0</div><div class="a" style="left:276px;top:864px;width:1615px;height:10px;background:#e1ebf7"></div><div class="a" style="left:276px;top:865px;width:1594px;height:8px;background:#9fc4f5;border-radius:0 4px 4px 0"></div>
</body></html>
